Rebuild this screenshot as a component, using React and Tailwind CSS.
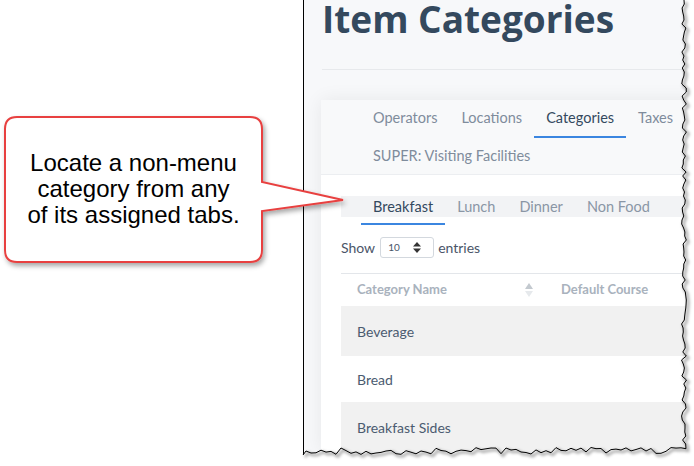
import React from 'react'

// jagged "torn paper" edge for the right and bottom of the screenshot
function tornPoints() {
  let seed = 7
  const rnd = () => {
    seed = (seed * 9301 + 49297) % 233280
    return seed / 233280
  }
  const right = []
  for (let y = 0; y <= 446; y += 4) {
    right.push([684 + (rnd() - 0.5) * 5, y])
  }
  const bottom = []
  for (let x = 686; x >= 303; x -= 5) {
    bottom.push([x, 451 + (rnd() - 0.5) * 7])
  }
  bottom.push([303, 455])
  return [...right, ...bottom]
}

function TornEdge() {
  const pts = tornPoints()
  const line = pts.map((p, i) => `${i ? 'L' : 'M'}${p[0].toFixed(1)} ${p[1].toFixed(1)}`).join(' ')
  const fill = `M694 0 ${pts.map((p) => `L${p[0].toFixed(1)} ${p[1].toFixed(1)}`).join(' ')} L303 466 L694 466 Z`
  return (
    <svg className="absolute inset-0 pointer-events-none" width="694" height="466" viewBox="0 0 694 466">
      <defs>
        <filter id="blur" x="-10%" y="-10%" width="120%" height="120%">
          <feGaussianBlur stdDeviation="1.6" />
        </filter>
      </defs>
      <path d={fill} fill="#ffffff" />
      <path d={line} fill="none" stroke="#000" strokeOpacity="0.35" strokeWidth="2.5" transform="translate(2 2)" filter="url(#blur)" />
      <path d={line} fill="none" stroke="#000" strokeWidth="1" />
    </svg>
  )
}

function Callout() {
  return (
    <>
      <svg className="absolute inset-0 pointer-events-none" width="694" height="466" viewBox="0 0 694 466">
        <defs>
          <filter id="shadow" x="-10%" y="-10%" width="130%" height="130%">
            <feDropShadow dx="2" dy="3" stdDeviation="2.5" floodColor="#000" floodOpacity="0.35" />
          </filter>
        </defs>
        <path
          d="M17 117 H250 Q262 117 262 129 V182 L343 200 L262 211 V250 Q262 262 250 262 H17 Q5 262 5 250 V129 Q5 117 17 117 Z"
          fill="#ffffff"
          stroke="#e8403f"
          strokeWidth="2"
          filter="url(#shadow)"
        />
      </svg>
      <div className="absolute left-[5px] top-[117px] w-[257px] h-[144px] flex items-center justify-center text-center text-[24px] leading-[26px] text-black font-['Liberation_Sans',Arial,sans-serif]">
        <p>
          Locate a non-menu
          <br />
          category from any
          <br />
          of its assigned tabs.
        </p>
      </div>
    </>
  )
}

function SortIcon() {
  return (
    <svg width="8" height="14" viewBox="0 0 8 14">
      <path d="M4 0 L8 6 H0 Z" fill="#c3c9cf" />
      <path d="M4 14 L8 8 H0 Z" fill="#e6e9ec" />
    </svg>
  )
}

export default function App() {
  const mainTabs = ['Operators', 'Locations', 'Categories', 'Taxes']
  const subTabs = ['Breakfast', 'Lunch', 'Dinner', 'Non Food']
  const rows = [
    { name: 'Beverage', h: 'h-[50px]', bg: 'bg-[#f1f1f1]' },
    { name: 'Bread', h: 'h-[46px]', bg: 'bg-white' },
    { name: 'Breakfast Sides', h: 'h-[50px]', bg: 'bg-[#f1f1f1]' },
  ]

  return (
    <div className="relative w-[694px] h-[466px] overflow-hidden bg-white font-['Lato','Noto_Sans',sans-serif]">
      {/* Screenshot panel */}
      <div className="ml-[303px] w-[391px] h-[460px] border-l border-black bg-[#f7f8fa] overflow-hidden">
        <h1 className="pl-[18px] text-[37px] leading-[38px] font-bold text-[#34495e] font-['Open_Sans',sans-serif] whitespace-nowrap">
          Item Categories
        </h1>
        <div className="mt-[31px] ml-[18px] border-t border-[#e7e9ec]" />

        {/* Card */}
        <div className="mt-[30px] ml-[17px] w-[420px] bg-white shadow-[0_0_18px_rgba(0,0,0,0.07)]">
          <div className="bg-[#f8f9fa] border-b border-[#eceef1] pl-10 text-[14.5px]">
            <div className="flex">
              {mainTabs.map((t) => (
                <div
                  key={t}
                  className={`px-3 h-[38px] flex items-center whitespace-nowrap ${
                    t === 'Categories' ? 'border-b-2 border-[#3b86e0] text-[#34495e]' : 'border-b-2 border-transparent text-[#7f8c9c]'
                  }`}
                >
                  {t}
                </div>
              ))}
            </div>
            <div className="flex">
              <div className="px-3 h-[36px] flex items-center text-[#7f8c9c] whitespace-nowrap">SUPER: Visiting Facilities</div>
            </div>
          </div>

          <div className="pl-5 pt-[21px] text-[14px]">
            {/* Sub tabs */}
            <div className="pl-5 flex text-[14.5px] bg-[linear-gradient(to_bottom,#f2f3f5_21px,transparent_21px)]">
              {subTabs.map((t) => (
                <div
                  key={t}
                  className={`px-3 pb-[6px] border-b-2 ${t === 'Breakfast' ? 'border-[#3b86e0] text-[#34495e]' : 'border-transparent text-[#8a96a5]'}`}
                >
                  <div className="h-[21px] leading-[21px] whitespace-nowrap">{t}</div>
                </div>
              ))}
            </div>

            {/* Show entries */}
            <div className="mt-[12px] flex items-center h-[21px] text-[#4a5568]">
              <span>Show</span>
              <div className="ml-[5px] w-[54px] h-[21px] border border-[#d3d8de] rounded-[3px] flex items-center justify-between pl-[7px] pr-[12px]">
                <span className="text-[10px] text-[#4a5568]">10</span>
                <svg width="8" height="11" viewBox="0 0 8 11">
                  <path d="M4 0 L8 4.5 H0 Z" fill="#333" />
                  <path d="M4 11 L8 6.5 H0 Z" fill="#333" />
                </svg>
              </div>
              <span className="ml-[4px]">entries</span>
            </div>

            {/* Table */}
            <div className="mt-[15px] border-t border-[#e3e6ea]">
              <div className="h-[32px] flex items-center text-[13px] font-bold text-[#a9b2bd]">
                <div className="w-[204px] pl-4 pr-[12px] flex items-center justify-between">
                  <span>Category Name</span>
                  <SortIcon />
                </div>
                <div className="pl-4 whitespace-nowrap">Default Course</div>
              </div>
              {rows.map((r) => (
                <div key={r.name} className={`${r.h} ${r.bg} flex items-center pl-4 text-[#4b5b70]`}>
                  {r.name}
                </div>
              ))}
            </div>
          </div>
        </div>
      </div>

      <TornEdge />
      <Callout />
    </div>
  )
}
